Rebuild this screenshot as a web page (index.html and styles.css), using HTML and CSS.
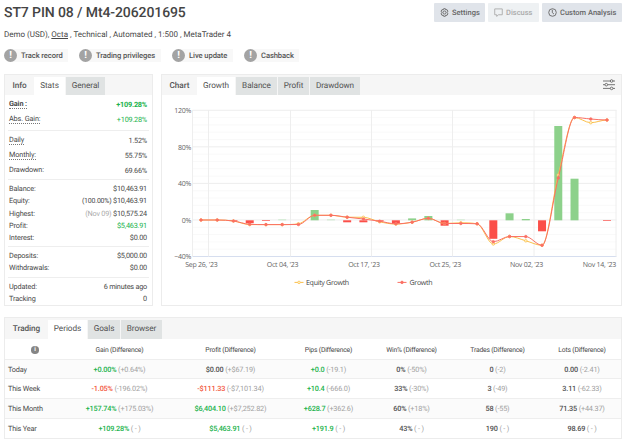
FILE: index.html
```html
<!DOCTYPE html>
<html lang="en">
<head>
<meta charset="utf-8">
<title>ST7 PIN 08</title>
<link rel="stylesheet" href="styles.css">
</head>
<body>
<header class="top">
  <h1>ST7 PIN 08 / Mt4-206201695</h1>
  <div class="actions">
    <button class="btn settings"><svg viewBox="0 0 10 10"><path d="M4 .8h2l.4 1.3 1.4-.3 1 1.7-.9 1.5.9 1.5-1 1.7-1.4-.3L6 9.200H4l-.4-1.300-1.400.3-1-1.700L2.100 5l-.9-1.500 1-1.700 1.400.3z"/><circle cx="5" cy="5" r="1.700"/></svg>Settings</button>
    <button class="btn discuss"><svg viewBox="0 0 10 10"><path d="M.8 1h8.400v6.500H5L3 9.300V7.500H.8z"/></svg>Discuss</button>
    <button class="btn custom"><svg viewBox="0 0 10 10"><circle cx="5" cy="5" r="4.200"/><path d="M4.800 2v3.200l1.800 1.500"/></svg>Custom Analysis</button>
  </div>
</header>
<p class="desc">Demo (USD), <u>Octa</u> , Technical , Automated , 1:500 , MetaTrader 4</p>
<div class="badges">
  <span class="badge b1"><i>!</i><b>Track record</b></span>
  <span class="badge b2"><i>!</i><b>Trading privileges</b></span>
  <span class="badge b3"><i>!</i><b>Live update</b></span>
  <span class="badge b4"><i>!</i><b>Cashback</b></span>
</div>
<main class="panels">
  <section class="panel stats">
    <nav class="tabs"><span class="name">Info</span><span class="tab on">Stats</span><span class="tab general">General</span></nav>
    <dl class="tall g1">
      <div class="strong"><dt><u>Gain :</u></dt><dd class="up">+109.28%</dd></div>
      <div><dt><u>Abs. Gain:</u></dt><dd class="up">+109.28%</dd></div>
    </dl>
    <dl class="tall g2">
      <div><dt><u>Daily</u></dt><dd>1.52%</dd></div>
      <div><dt><u>Monthly:</u></dt><dd>55.75%</dd></div>
      <div><dt>Drawdown:</dt><dd>69.66%</dd></div>
    </dl>
    <dl class="g3">
      <div><dt>Balance:</dt><dd>$10,463.91</dd></div>
      <div><dt>Equity:</dt><dd><span class="pct">(100.00%)</span> $10,463.91</dd></div>
      <div><dt>Highest:</dt><dd><span class="dim">(Nov 09)</span> $10,575.24</dd></div>
      <div><dt>Profit:</dt><dd class="up">$5,463.91</dd></div>
      <div><dt>Interest:</dt><dd>$0.00</dd></div>
    </dl>
    <dl class="g4">
      <div><dt>Deposits:</dt><dd>$5,000.00</dd></div>
      <div><dt>Withdrawals:</dt><dd>$0.00</dd></div>
    </dl>
    <dl class="g5">
      <div><dt>Updated:</dt><dd>6 minutes ago</dd></div>
      <div><dt>Tracking</dt><dd>0</dd></div>
    </dl>
  </section>
  <section class="panel chart">
    <nav class="tabs"><span class="name">Chart</span><span class="tab on growth">Growth</span><span class="tab balance">Balance</span><span class="tab profit">Profit</span><span class="tab drawdown">Drawdown</span>
      <svg class="sliders" viewBox="0 0 12 12"><path d="M0 2h7.300M10 2h2M0 5.700h2M4.700 5.700H12M0 9.400h7.300M10 9.400h2"/><circle cx="8.600" cy="2" r="1.300"/><circle cx="3.300" cy="5.700" r="1.300"/><circle cx="8.600" cy="9.400" r="1.300"/></svg>
    </nav>
    <svg id="plot" class="plot" viewBox="162 95 459 210"></svg>
  </section>
</main>
<section class="panel trading">
  <nav class="tabs"><span class="name">Trading</span><span class="tab on periods">Periods</span><span class="tab goals">Goals</span><span class="tab browser">Browser</span></nav>
  <div class="row head"><span><em class="info">i</em></span><span>Gain (Difference)</span><span>Profit (Difference)</span><span>Pips (Difference)</span><span>Win% (Difference)</span><span>Trades (Difference)</span><span>Lots (Difference)</span></div>
  <div class="row alt"><span>Today</span><span><b class="up">+0.00%</b> (+0.64%)</span><span><b>$0.00</b> (+$67.19)</span><span><b class="up">+0.0</b> (-19.1)</span><span><b>0%</b> (-50%)</span><span><b>0</b> (-2)</span><span><b>0.00</b> (-2.41)</span></div>
  <div class="row"><span>This Week</span><span><b class="down">-1.05%</b> (-196.02%)</span><span><b class="down">-$111.33</b> (-$7,101.34)</span><span><b class="up">+10.4</b> (-666.0)</span><span><b>33%</b> (-30%)</span><span><b>3</b> (-49)</span><span><b>3.11</b> (-62.33)</span></div>
  <div class="row alt"><span>This Month</span><span><b class="up">+157.74%</b> (+175.03%)</span><span><b class="up">$6,404.10</b> (+$7,252.82)</span><span><b class="up">+628.7</b> (+362.6)</span><span><b>60%</b> (+18%)</span><span><b>58</b> (-55)</span><span><b>71.35</b> (+44.37)</span></div>
  <div class="row"><span>This Year</span><span><b class="up">+109.28%</b> ( - )</span><span><b class="up">$5,463.91</b> ( - )</span><span><b class="up">+191.9</b> ( - )</span><span><b>43%</b> ( - )</span><span><b>190</b> ( - )</span><span><b>98.69</b> ( - )</span></div>
</section>
<script src="chart.js"></script>
</body>
</html>
```
FILE: styles.css
```css
* { box-sizing: border-box; }
body { margin: 0; padding: 0 3px 0 4px; width: 625px; height: 444px; overflow: hidden; background: #fff; color: #484848; font: 7.2px/10px Roboto, "Liberation Sans", sans-serif; text-rendering: geometricPrecision; }
.top { display: flex; justify-content: space-between; height: 27px; }
h1 { margin: 5px 0 0; font-size: 14px; line-height: 16px; letter-spacing: -.1px; font-weight: 500; color: #444; white-space: nowrap; }
.actions { display: flex; gap: 3px; padding-top: 3px; }
.btn { display: flex; align-items: center; gap: 3px; height: 19px; margin: 0; padding: 0 0 0 6px; border: 0; border-radius: 1px; background: #e0e4ea; color: #666; font: 500 7.5px/10px Roboto, sans-serif; white-space: nowrap; text-rendering: geometricPrecision; }
.btn svg { width: 9px; height: 9px; flex: none; fill: none; stroke: currentColor; stroke-width: 1; }
.settings { width: 51px; }
.discuss { width: 51px; background: #eef1f3; color: #aaa; }
.custom { width: 80px; }
.desc { margin: 2px 0 0; height: 11px; line-height: 11px; font-size: 8px; white-space: nowrap; }
.desc u { text-underline-offset: 1px; }
.badges { display: flex; height: 34px; padding-top: 9px; }
.badge { display: flex; align-items: center; height: 13px; font-size: 7.6px; letter-spacing: -.08px; }
.badge i { display: block; width: 13px; height: 13px; border-radius: 50%; background: #a3a3a3; color: #fff; font: 700 10px/13px Roboto, sans-serif; text-align: center; flex: none; z-index: 1; }
.badge b { font-weight: 500; color: #555; background: #f8f8f8; height: 13px; line-height: 13px; margin-left: -3px; padding-left: 7px; flex: 1; margin-right: 11px; white-space: nowrap; }
.b1 { width: 75px; } .b2 { width: 93px; } .b3 { width: 72px; } .b4 { width: 66px; }
.panels { display: flex; gap: 8px; height: 232px; }
.panel { border: 1px solid #ececec; background: #fff; }
.tabs { display: flex; height: 20px; padding-top: 2px; background: #f6f6f6; font-size: 8.2px; line-height: 18px; letter-spacing: -.05px; color: #505050; }
.tabs span { text-align: center; white-space: nowrap; }
.name { font-weight: 500; color: #555; }
.tab { background: #e0e3e3; margin-right: 1px; }
.tab.on { background: #fff; }
.stats { width: 150px; }
.stats .name { width: 29px; }
.stats .on { width: 31px; margin-right: 1px; }
.general { width: 39px; }
dl { margin: 0 3px; padding: 2px 2px 0 1px; border-bottom: 1px solid #eee; font-size: 7.3px; letter-spacing: -.22px; }
dl div { display: flex; justify-content: space-between; height: 12.25px; line-height: 13px; }
dl.tall div { height: 15px; line-height: 16px; }
dt, dd { margin: 0; white-space: nowrap; }
dt { letter-spacing: -.14px; }
dt u { text-decoration: none; border-bottom: 1px dotted #777; }
.tall dt { line-height: 14px; }
.g1 { height: 36px; }
.g2 { height: 49px; }
.g3 { height: 67px; }
.g4 { height: 31px; }
.g5 { border: 0; }
.strong { font-weight: 700; }
.up { color: #20b24b; }
.down { color: #f2563c; }
.dim { color: #aaa; }
.pct { font-size: 7px; }
.chart { width: 461px; }
.chart .name { width: 35px; }
.chart .growth { width: 38px; }
.balance { width: 41px; } .profit { width: 31px; } .drawdown { width: 50px; }
.sliders { width: 12px; height: 12px; margin: 2px 6px 0 auto; fill: none; stroke: #666; stroke-width: .9; }
.plot { display: block; width: 459px; height: 210px; font: 7px "Open Sans", sans-serif; letter-spacing: -.25px; fill: #666; }
.legend { font-size: 7.1px; font-weight: 500; letter-spacing: -.32px; fill: #444; }
.trading { margin-top: 11px; height: 122px; width: 618px; }
.trading .tabs { height: 21px; padding-top: 2px; line-height: 19px; }
.trading .name { width: 43px; }
.periods { width: 39px; }
.goals { width: 32px; } .browser { width: 41px; }
.row { display: grid; grid-template-columns: 59px 111px 111px 85px 81px 91px 78px; height: 19.8px; line-height: 19px; border-bottom: 1px solid #eee; color: #a0a0a0; font-size: 7.3px; letter-spacing: -.18px; text-align: center; white-space: nowrap; }
.row:last-child { border: 0; }
.row b { font-weight: 500; color: #505050; }
.row b.up { color: #20b24b; }
.row b.down { color: #f2563c; }
.row > span:first-child { text-align: left; padding-left: 3px; color: #484848; }
.row.head { height: 20.500px; line-height: 23px; color: #484848; font-size: 6.8px; letter-spacing: -.2px; }
.row.head > span:first-child { text-align: center; padding: 7px 0 0 1px; }
.alt { background: #fbfbfb; }
.info { display: block; width: 7.500px; height: 7.500px; margin: 0 auto; border-radius: 50%; background: #858585; color: #fff; font: 700 6px/8px Roboto, sans-serif; text-align: center; }
```
FILE: chart.js
```javascript
const svg = document.getElementById('plot');
const NS = 'http://www.w3.org/2000/svg';
function add(tag, attrs, text) {
  const el = document.createElementNS(NS, tag);
  for (const k in attrs) el.setAttribute(k, attrs[k]);
  if (text) el.textContent = text;
  svg.appendChild(el);
  return el;
}
const zero = 220.3;
const xAt = i => 201 + i * 16.24;

// grid
for (let i = 0; i <= 20; i++) {
  const y = 110.3 + i * 7.31;
  add('path', { d: `M192.500 ${y}H616.500`, stroke: i === 20 ? '#ccd6eb' : i % 5 ? '#f8f8f8' : '#e8e8e8', 'stroke-width': .8 });
}
[192.5, 208.5, 290.5, 371.5, 452.5, 534, 616].forEach(x => add('path', { d: `M${x} 110V256.500`, stroke: '#eee', 'stroke-width': 1 }));

// axis labels
['120%', '80%', '40%', '0%', '−40%'].forEach((t, i) => add('text', { x: 191, y: 113 + i * 36.5, 'text-anchor': 'end' }, t));
["Sep 26, '23", "Oct 04, '23", "Oct 17, '23", "Oct 25, '23", "Nov 02, '23"].forEach((t, i) => add('text', { x: 201.3 + i * 81.3, y: 267.3, 'text-anchor': 'middle' }, t));
add('text', { x: 616, y: 267.3, 'text-anchor': 'end' }, "Nov 14, '23");

// bars: index, y of the bar's far end
[[2, 221], [3, 223.2], [4, 221], [5, 219.4], [7, 210], [8, 219.4], [9, 222.3], [10, 222.3], [11, 221.4], [12, 223.3], [13, 218.4], [14, 216], [15, 225.7], [16, 219.5], [18, 238.8], [19, 213.3], [20, 219], [21, 231.3], [22, 126], [23, 178.7], [25, 221]].forEach(([i, y]) => {
  const pale = [5, 8, 16].includes(i);
  add('rect', { x: xAt(i) - 4, y: Math.min(y, zero), width: 8, height: Math.abs(y - zero), fill: y > zero ? '#fb4f49' : pale ? '#c5e8c7' : '#8dd18b' });
});

// monotone spline through the points
function series(ys, color, hollow) {
  const n = ys.length, h = 16.24;
  const m = ys.map((y, i) => {
    if (!i || i === n - 1) return 0;
    const a = y - ys[i - 1], b = ys[i + 1] - y;
    if (a * b <= 0) return 0;
    const s = (a + b) / 2;
    return Math.sign(s) * Math.min(Math.abs(s), 3 * Math.abs(a), 3 * Math.abs(b));
  });
  let d = `M${xAt(0)} ${ys[0]}`;
  for (let i = 1; i < n; i++) {
    d += `C${xAt(i - 1) + h / 3} ${ys[i - 1] + m[i - 1] / 3} ${xAt(i) - h / 3} ${ys[i] - m[i] / 3} ${xAt(i)} ${ys[i]}`;
  }
  add('path', { d, fill: 'none', stroke: color, 'stroke-width': 1 });
  ys.forEach((y, i) => add('circle', { cx: xAt(i), cy: y, r: 1.3, fill: hollow ? '#fff3c8' : color, stroke: color, 'stroke-width': .7 }));
}
const growth = [220, 220, 221, 224.3, 224.6, 224.6, 224.5, 215.3, 215.3, 217.2, 219, 221.2, 223.8, 222.2, 218.3, 223.5, 223.5, 223.8, 241.7, 236.5, 236.6, 245.3, 178, 117.5, 119, 120];
const equity = growth.slice();
Object.assign(equity, { 3: 224.6, 6: 223.8, 10: 217.3, 11: 221.8, 12: 224.1, 16: 222.8, 18: 244, 20: 240.8, 22: 175, 24: 122.7 });
series(equity, '#fbbf4b', true);
series(growth, '#fa7064', false);

// legend
[[294.500, '#fbbf4b', 306, 'Equity Growth'], [397.500, '#fa7064', 409.500, 'Growth']].forEach(([x, c, tx, t]) => {
  add('path', { d: `M${x} 282.400h9`, stroke: c, 'stroke-width': 1 });
  add('circle', { cx: x + 4.5, cy: 282.4, r: 1.3, fill: c === '#fbbf4b' ? '#fff3c8' : c, stroke: c, 'stroke-width': .7 });
  add('text', { x: tx, y: 285, class: 'legend' }, t);
});
```
